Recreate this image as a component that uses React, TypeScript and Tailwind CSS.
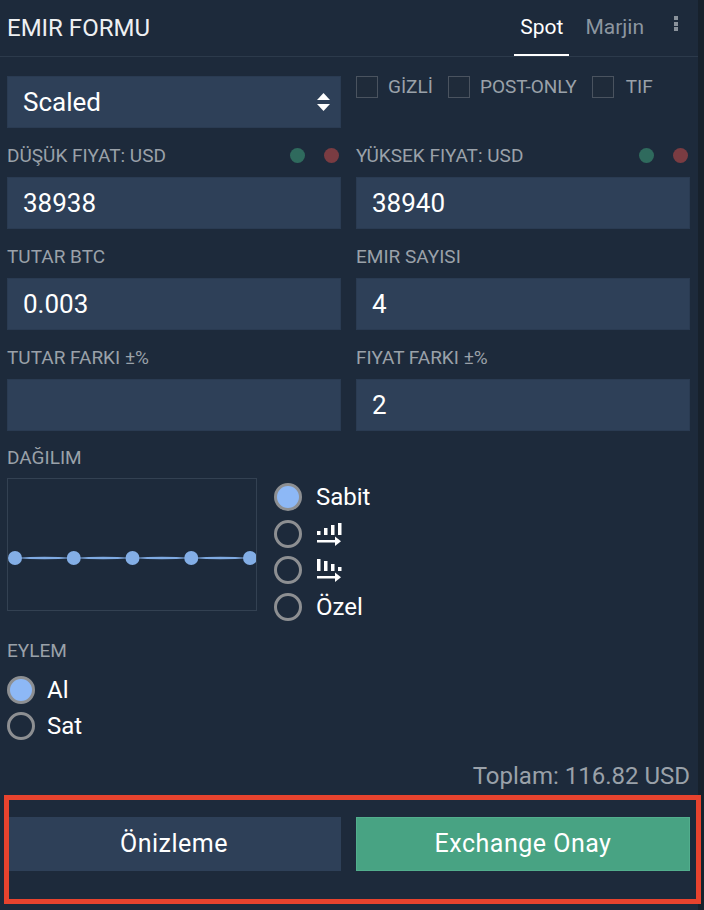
import React from 'react';

const labelCls = 'h-[22px] flex items-center text-[19px] leading-none text-[#9aa1a9]';
const inputCls =
  'h-[52px] w-full bg-[#2e4058] border border-[#2a3b52] flex items-center px-[15px] text-[26px] text-white';

function Dots() {
  return (
    <div className="flex items-center gap-[19px] pr-[2px]">
      <span className="w-[15px] h-[15px] rounded-full bg-[#2f6a5d]" />
      <span className="w-[15px] h-[15px] rounded-full bg-[#7a3c42]" />
    </div>
  );
}

function Field({ label, value, dots }: { label: string; value?: string; dots?: boolean }) {
  return (
    <div className="flex flex-col">
      <div className="flex items-center justify-between">
        <div className={labelCls}>{label}</div>
        {dots && <Dots />}
      </div>
      <div className={'mt-[11px] ' + inputCls}>{value}</div>
    </div>
  );
}

function Radio({ checked }: { checked?: boolean }) {
  return (
    <span
      className={
        'w-[28px] h-[28px] rounded-full border-[3px] border-[#8d8f92] shrink-0 ' +
        (checked ? 'bg-[#8db8f6]' : 'bg-transparent')
      }
    />
  );
}

function BarsIcon({ up }: { up?: boolean }) {
  const heights = up ? [4, 7, 10, 12] : [12, 10, 7, 4];
  return (
    <svg width="26" height="24" viewBox="0 0 26 24">
      {heights.map((h, i) => (
        <rect key={i} x={1 + i * 7} y={12 - h} width="3.5" height={h} fill="#ffffff" />
      ))}
      <rect x="1" y="17" width="20" height="2.5" fill="#ffffff" />
      <path d="M19 13.5 L25 18.25 L19 23 Z" fill="#ffffff" />
    </svg>
  );
}

function Chart() {
  const xs = [7, 65.75, 124.5, 183.25, 242];
  const y = 79;
  return (
    <svg width="250" height="133" viewBox="0 0 250 133" className="block">
      {xs.slice(0, -1).map((x, i) => {
        const x2 = xs[i + 1];
        const m = (x + x2) / 2;
        return (
          <path
            key={i}
            d={`M${x} ${y} Q${m} ${y - 2.6} ${x2} ${y} Q${m} ${y + 2.6} ${x} ${y} Z`}
            fill="#7faae2"
          />
        );
      })}
      {xs.map((x, i) => (
        <circle key={i} cx={x} cy={y} r="7" fill="#83aee6" />
      ))}
    </svg>
  );
}

export default function App() {
  return (
    <div
      className="h-[910px] w-full flex overflow-hidden bg-[#1d2a3b] text-white"
      style={{ fontFamily: 'Roboto, "Noto Sans", sans-serif' }}
    >
      <div className="w-[698px] shrink-0 flex flex-col">
        {/* header */}
        <div className="h-[57px] border-b border-[#2c3a4b] flex items-center justify-between pl-[7px] pr-[20px]">
          <div className="text-[24px] text-[#eef0f2]">EMIR FORMU</div>
          <div className="h-full flex items-center">
            <div className="h-full flex items-center px-[6px] border-b-2 border-white text-[21px] text-white pt-[2px]">
              Spot
            </div>
            <div className="h-full flex items-center px-[6px] ml-[10px] text-[21px] text-[#8c96a0]">Marjin</div>
            <div className="ml-[24px] self-start mt-[16px] flex flex-col gap-[1.5px]">
              <span className="w-[4px] h-[4px] bg-[#8a929b]" />
              <span className="w-[4px] h-[4px] bg-[#8a929b]" />
              <span className="w-[4px] h-[4px] bg-[#8a929b]" />
            </div>
          </div>
        </div>

        <div className="pl-[7px] pr-[8px] pt-[19px] flex flex-col">
          {/* type + flags */}
          <div className="grid grid-cols-2 gap-x-[15px]">
            <div className="h-[52px] bg-[#2e4058] border border-[#2a3b52] flex items-center justify-between pl-[15px] pr-[10px]">
              <span className="text-[26px] text-white">Scaled</span>
              <svg width="13" height="19" viewBox="0 0 13 19">
                <path d="M6.5 0 L13 7 L0 7 Z" fill="#ffffff" />
                <path d="M0 11 L13 11 L6.5 18 Z" fill="#ffffff" />
              </svg>
            </div>
            <div className="flex items-start">
              <div className="flex items-center h-[22px]">
                <span className="w-[22px] h-[22px] border border-[#4a535f] bg-[#1f2b3a]" />
                <span className="ml-[10px] text-[19px] text-[#9aa1a9]">GİZLİ</span>
                <span className="ml-[15px] w-[22px] h-[22px] border border-[#4a535f] bg-[#1f2b3a]" />
                <span className="ml-[10px] text-[19px] text-[#9aa1a9]">POST-ONLY</span>
                <span className="ml-[15px] w-[22px] h-[22px] border border-[#4a535f] bg-[#1f2b3a]" />
                <span className="ml-[12px] text-[19px] text-[#9aa1a9]">TIF</span>
              </div>
            </div>
          </div>

          <div className="grid grid-cols-2 gap-x-[15px] mt-[16px]">
            <Field label="DÜŞÜK FIYAT: USD" value="38938" dots />
            <Field label="YÜKSEK FIYAT: USD" value="38940" dots />
          </div>
          <div className="grid grid-cols-2 gap-x-[15px] mt-[16px]">
            <Field label="TUTAR BTC" value="0.003" />
            <Field label="EMIR SAYISI" value="4" />
          </div>
          <div className="grid grid-cols-2 gap-x-[15px] mt-[16px]">
            <Field label="TUTAR FARKI ±%" />
            <Field label="FIYAT FARKI ±%" value="2" />
          </div>

          {/* distribution */}
          <div className={'mt-[15px] ' + labelCls}>DAĞILIM</div>
          <div className="mt-[10px] flex items-start">
            <div className="w-[250px] h-[133px] border border-[#334152] overflow-hidden">
              <Chart />
            </div>
            <div className="ml-[17px] mt-[5px] flex flex-col gap-[8.5px]">
              <div className="flex items-center h-[28px]">
                <Radio checked />
                <span className="ml-[14px] text-[24px] text-white">Sabit</span>
              </div>
              <div className="flex items-center h-[28px]">
                <Radio />
                <span className="ml-[14px] mt-[2px]">
                  <BarsIcon up />
                </span>
              </div>
              <div className="flex items-center h-[28px]">
                <Radio />
                <span className="ml-[14px] mt-[2px]">
                  <BarsIcon />
                </span>
              </div>
              <div className="flex items-center h-[28px]">
                <Radio />
                <span className="ml-[14px] text-[24px] text-white">Özel</span>
              </div>
            </div>
          </div>

          {/* action */}
          <div className={'mt-[19px] ' + labelCls}>EYLEM</div>
          <div className="mt-[14px] flex flex-col gap-[8px]">
            <div className="flex items-center h-[28px]">
              <Radio checked />
              <span className="ml-[12px] text-[24px] text-white">Al</span>
            </div>
            <div className="flex items-center h-[28px]">
              <Radio />
              <span className="ml-[12px] text-[24px] text-white">Sat</span>
            </div>
          </div>

          <div className="mt-[22px] h-[28px] flex items-center justify-end text-[24px] text-[#9aa1a9]">
            Toplam: 116.82 USD
          </div>

          {/* buttons */}
          <div className="relative mt-[27px] grid grid-cols-2 gap-x-[15px]">
            <button className="h-[54px] bg-[#2e4058] text-[25px] tracking-[0.02em] text-white">
              Önizleme
            </button>
            <button className="h-[54px] bg-[#48a383] border border-[#52ae8d] text-[25px] tracking-[0.02em] text-white">
              Exchange Onay
            </button>
            <div className="absolute -left-[3px] -top-[22px] -right-[11px] -bottom-[33px] border-[5px] border-[#e8432e] pointer-events-none" />
          </div>
        </div>
      </div>
      <div className="flex-1 bg-[#17212c]" />
    </div>
  );
}
